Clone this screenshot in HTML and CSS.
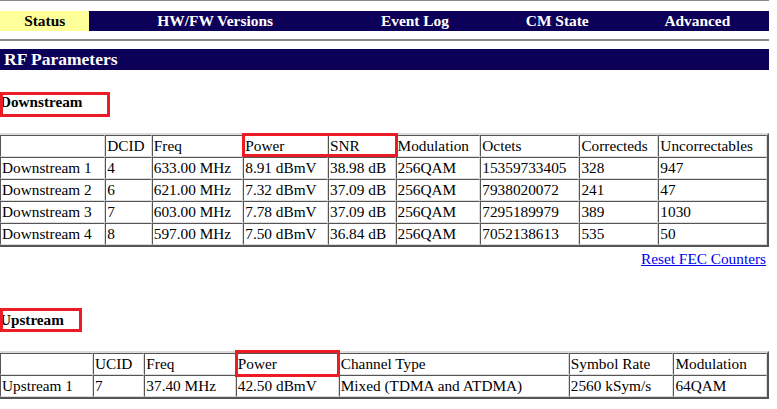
FILE: index.html
```html
<!DOCTYPE html>
<html lang="en">
<head>
    <meta charset="UTF-8">
    <title>Signal</title>
    <link rel="stylesheet" href="styles.css">
</head>
<body>
<div class="page">

    <div class="rule rule-top"></div>

    <!-- top menu -->
    <table class="nav">
        <tr>
            <td class="nav-on">Status</td>
            <td>HW/FW Versions</td>
            <td>Event Log</td>
            <td>CM State</td>
            <td>Advanced</td>
        </tr>
    </table>

    <div class="rule"></div>

    <div class="section-bar">RF Parameters</div>

    <div class="sub-heading sub-down">Downstream</div>

    <table class="data">
        <tr><td></td><td>DCID</td><td>Freq</td><td>Power</td><td>SNR</td><td>Modulation</td><td>Octets</td><td>Correcteds</td><td>Uncorrectables</td></tr>
        <tr><td>Downstream 1</td><td>4</td><td>633.00 MHz</td><td>8.91 dBmV</td><td>38.98 dB</td><td>256QAM</td><td>15359733405</td><td>328</td><td>947</td></tr>
        <tr><td>Downstream 2</td><td>6</td><td>621.00 MHz</td><td>7.32 dBmV</td><td>37.09 dB</td><td>256QAM</td><td>7938020072</td><td>241</td><td>47</td></tr>
        <tr><td>Downstream 3</td><td>7</td><td>603.00 MHz</td><td>7.78 dBmV</td><td>37.09 dB</td><td>256QAM</td><td>7295189979</td><td>389</td><td>1030</td></tr>
        <tr><td>Downstream 4</td><td>8</td><td>597.00 MHz</td><td>7.50 dBmV</td><td>36.84 dB</td><td>256QAM</td><td>7052138613</td><td>535</td><td>50</td></tr>
    </table>

    <div class="reset-row"><a href="#">Reset FEC Counters</a></div>

    <div class="sub-heading sub-up">Upstream</div>

    <table class="data">
        <tr><td></td><td>UCID</td><td>Freq</td><td>Power</td><td>Channel Type</td><td>Symbol Rate</td><td>Modulation</td></tr>
        <tr><td>Upstream 1</td><td>7</td><td>37.40 MHz</td><td>42.50 dBmV</td><td>Mixed (TDMA and ATDMA)</td><td>2560 kSym/s</td><td>64QAM</td></tr>
    </table>

    <!-- red annotation boxes -->
    <div class="mark mark-down"></div>
    <div class="mark mark-ds-power"></div>
    <div class="mark mark-up"></div>
    <div class="mark mark-us-power"></div>

</div>
</body>
</html>
```

FILE: styles.css
```css
body {
    margin: 0;
    padding: 0;
    background-color: #ffffff;
    color: #000000;
    font-family: "Liberation Serif", "Times New Roman", serif;
    font-size: 15.3px;
}
.page {
    position: relative;
    width: 769px;
}
.rule {
    height: 2px;
    margin-top: 8px;
    background-color: #888888;
}
.rule-top {
    height: 1px;
    margin-top: 0;
}
.nav {
    width: 100%;
    margin-top: 10px;
    border-collapse: collapse;
    border-spacing: 0;
}
.nav td {
    padding: 0;
    height: 20px;
    line-height: 20px;
    text-align: center;
    white-space: nowrap;
    font-weight: bold;
    font-size: 15.4px;
    color: #ffffff;
    background-color: #0c0058;
}
.nav td.nav-on {
    color: #000000;
    background-color: #ffff99;
}
.section-bar {
    margin-top: 8px;
    height: 21px;
    line-height: 21px;
    padding-left: 4px;
    font-weight: bold;
    font-size: 17.5px;
    color: #ffffff;
    background-color: #0c0058;
}
.sub-heading {
    line-height: 18px;
    font-weight: bold;
    font-size: 15.2px;
}
.sub-down {
    margin-top: 23px;
}
.sub-up {
    margin-top: 43px;
}
.data {
    width: calc(100% + 2px);
    margin-left: -2px;
    margin-top: 22px;
    border-collapse: separate;
    border-spacing: 0;
    border: 2px solid;
    border-color: #dcdcdc #555555 #555555 #dcdcdc;
}
.data td {
    padding: 1px;
    line-height: 18px;
    white-space: nowrap;
    text-align: left;
    border: 1px solid;
    border-color: #555555 #dcdcdc #dcdcdc #555555;
}
.reset-row {
    margin-top: 3px;
    line-height: 18px;
    text-align: right;
    padding-right: 3px;
}
.reset-row a {
    color: #0000ee;
    text-decoration: underline;
}
.mark {
    position: absolute;
    box-sizing: border-box;
    border: 3px solid #ed1c24;
}
.mark-down {
    left: 0;
    top: 92px;
    width: 110px;
    height: 25px;
}
.mark-ds-power {
    left: 242px;
    top: 133px;
    width: 156px;
    height: 24px;
}
.mark-up {
    left: 0;
    top: 308px;
    width: 82px;
    height: 24px;
}
.mark-us-power {
    left: 235px;
    top: 350px;
    width: 105px;
    height: 27px;
}
```
